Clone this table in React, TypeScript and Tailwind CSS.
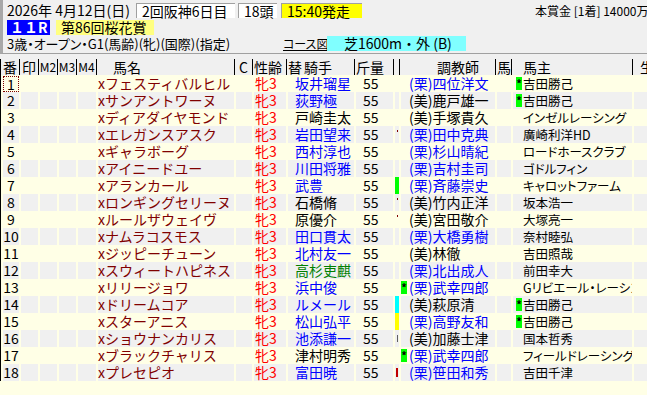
import { clsx as cn } from "clsx";

type Horse = {
  no: number;
  name: string;
  jockey: string;
  jc: "b" | "k" | "g";
  trainer: string;
  tStar?: boolean;
  owner: string;
  oStar?: boolean;
  mark?: "green" | "cyan" | "yellow" | "dot" | "line" | "red2";
};

const horses: Horse[] = [
  { no: 1, name: "フェスティバルヒル", jockey: "坂井瑠星", jc: "b", trainer: "(栗)四位洋文", owner: "吉田勝己", oStar: true },
  { no: 2, name: "サンアントワーヌ", jockey: "荻野極", jc: "b", trainer: "(美)鹿戸雄一", owner: "吉田勝己", oStar: true },
  { no: 3, name: "ディアダイヤモンド", jockey: "戸崎圭太", jc: "k", trainer: "(美)手塚貴久", owner: "インゼルレーシング" },
  { no: 4, name: "エレガンスアスク", jockey: "岩田望来", jc: "b", trainer: "(栗)田中克典", owner: "廣崎利洋HD", mark: "dot" },
  { no: 5, name: "ギャラボーグ", jockey: "西村淳也", jc: "b", trainer: "(栗)杉山晴紀", owner: "ロードホースクラブ" },
  { no: 6, name: "アイニードユー", jockey: "川田将雅", jc: "b", trainer: "(栗)吉村圭司", owner: "ゴドルフィン" },
  { no: 7, name: "アランカール", jockey: "武豊", jc: "b", trainer: "(栗)斉藤崇史", owner: "キャロットファーム", mark: "green" },
  { no: 8, name: "ロンギングセリーヌ", jockey: "石橋脩", jc: "k", trainer: "(美)竹内正洋", owner: "坂本浩一", mark: "dot" },
  { no: 9, name: "ルールザウェイヴ", jockey: "原優介", jc: "k", trainer: "(美)宮田敬介", owner: "大塚亮一", mark: "dot" },
  { no: 10, name: "ナムラコスモス", jockey: "田口貫太", jc: "b", trainer: "(栗)大橋勇樹", owner: "奈村睦弘" },
  { no: 11, name: "ジッピーチューン", jockey: "北村友一", jc: "b", trainer: "(美)林徹", owner: "吉田照哉" },
  { no: 12, name: "スウィートハピネス", jockey: "高杉吏麒", jc: "g", trainer: "(栗)北出成人", owner: "前田幸大" },
  { no: 13, name: "リリージョワ", jockey: "浜中俊", jc: "b", trainer: "(栗)武幸四郎", tStar: true, owner: "Gリビエール・レーシン" },
  { no: 14, name: "ドリームコア", jockey: "ルメール", jc: "b", trainer: "(美)萩原清", owner: "吉田勝己", oStar: true, mark: "cyan" },
  { no: 15, name: "スターアニス", jockey: "松山弘平", jc: "b", trainer: "(栗)高野友和", owner: "吉田勝己", oStar: true, mark: "yellow" },
  { no: 16, name: "ショウナンカリス", jockey: "池添謙一", jc: "b", trainer: "(美)加藤士津", owner: "国本哲秀", mark: "line" },
  { no: 17, name: "ブラックチャリス", jockey: "津村明秀", jc: "k", trainer: "(栗)武幸四郎", tStar: true, owner: "フィールドレーシング" },
  { no: 18, name: "プレセピオ", jockey: "富田暁", jc: "b", trainer: "(栗)笹田和秀", owner: "吉田千津", mark: "red2" },
];

function Star() {
  return (
    <span className="flex h-[13px] w-[6px] items-center justify-center bg-[#00ff00] text-[11px] font-bold leading-none text-black">
      *
    </span>
  );
}

function Mark({ kind }: { kind?: Horse["mark"] }) {
  if (kind === "green") return <div className="h-full w-[4px] bg-[#00ff00]" />;
  if (kind === "cyan") return <div className="h-full w-[4px] bg-[#00ffff]" />;
  if (kind === "yellow") return <div className="h-full w-[4px] bg-[#ffff00]" />;
  if (kind === "dot") return <div className="ml-[2px] mt-[4px] h-[2px] w-[1px] bg-[#800000]" />;
  if (kind === "line") return <div className="ml-[2px] mt-[5px] h-[7px] w-[1px] bg-[#606060]" />;
  if (kind === "red2") return <div className="ml-[1px] mt-[4px] h-[9px] w-[2px] bg-[#c00000]" />;
  return null;
}

function Row({ h, i }: { h: Horse; i: number }) {
  const cell = cn("h-full shrink-0 whitespace-nowrap border-l-2 border-[#ffffe6]", i % 2 === 1 && "bg-[#f0f0f0]");
  const jColor = h.jc === "b" ? "text-[#0000ff]" : h.jc === "g" ? "text-[#008000]" : "text-black";
  const tColor = h.trainer.startsWith("(栗)") ? "text-[#0000ff]" : "text-black";

  return (
    <div className="flex h-[17px] leading-[17px]">
      <div className={cn(cell, "w-[18px] text-center")}>
        {i === 0 ? (
          <div className="mt-[1px] h-[16px] border border-dotted border-[#800000] leading-[14px]">{h.no}</div>
        ) : (
          h.no
        )}
      </div>
      <div className={cn(cell, "w-[19px]")} />
      <div className={cn(cell, "w-[19px]")} />
      <div className={cn(cell, "w-[19px]")} />
      <div className={cn(cell, "w-[20px]")} />
      <div className={cn(cell, "w-[138px] text-[#800000]")}>x{h.name}</div>
      <div className={cn(cell, "w-[18px]")} />
      <div className={cn(cell, "w-[34px] pl-[1px] text-[#ff0000]")}>牝3</div>
      <div className={cn(cell, "w-[68px] pl-[7px]", jColor)}>{h.jockey}</div>
      <div className={cn(cell, "w-[39px] pl-[7px]")}>55</div>
      <div className={cn(cell, "w-[6px]")}>
        <Mark kind={h.mark} />
      </div>
      <div className={cn(cell, "flex w-[96px] items-center")}>
        <div className="w-[8px] shrink-0">{h.tStar && <Star />}</div>
        <span className={tColor}>{h.trainer}</span>
      </div>
      <div className={cn(cell, "w-[16px]")} />
      <div className={cn(cell, "flex w-[121px] items-center overflow-hidden pl-[3px] text-[12.5px] [font-feature-settings:'palt']")}>
        <div className="w-[7px] shrink-0">{h.oStar && <Star />}</div>
        <span>{h.owner}</span>
      </div>
      <div className={cn(cell, "flex-1")} />
    </div>
  );
}

function Th({ className, children }: { className: string; children?: React.ReactNode }) {
  return (
    <div className={cn("h-[16px] shrink-0 whitespace-nowrap border-l border-black leading-[16px]", className)}>
      {children}
    </div>
  );
}

export default function App() {
  return (
    <div className="flex h-[395px] w-[647px] flex-col overflow-hidden bg-[#ffffe6] font-['Noto_Sans_CJK_JP',sans-serif] text-[14px] text-black">
      {/* race info */}
      <div className="h-[54px] shrink-0 border-b border-l-[3px] border-b-[#a0a0a0] border-l-[#a8a8a8] bg-[#f0f0f0] pl-[4px] pt-[3px]">
        <div className="flex h-[15px] items-center whitespace-nowrap leading-[15px]">
          <div className="w-[129px] shrink-0">2026年 4月12日(日)</div>
          <div className="h-full w-[99px] shrink-0 border-l border-t border-[#a0a0a0] bg-white pl-[5px]">2回阪神6日目</div>
          <div className="ml-[3px] h-full w-[39px] shrink-0 border-l border-t border-[#a0a0a0] bg-white pl-[5px]">18頭</div>
          <div className="ml-[4px] h-full w-[81px] shrink-0 border-l border-t border-[#a0a0a0] bg-[#ffff00] pl-[5px]">15:40発走</div>
          <div className="ml-[173px] text-[12px] [font-feature-settings:'palt']">本賞金 [1着] 14000万</div>
        </div>
        <div className="mt-[2px] flex h-[15px] items-center whitespace-nowrap leading-[15px]">
          <div className="h-full w-[43px] shrink-0 bg-[#0000ff] pl-[3px] font-bold text-white">１１R</div>
          <div className="ml-[6px] h-full w-[98px] shrink-0 bg-[#ffff80] pl-[5px]">第86回桜花賞</div>
        </div>
        <div className="mt-[1px] flex h-[15px] items-center whitespace-nowrap leading-[15px]">
          <div className="w-[276px] shrink-0 text-[13px] [font-feature-settings:'palt']">
            3歳・オープン・G1(馬齢)(牝)(国際)(指定)
          </div>
          <div className="w-[44px] shrink-0 text-[12px] underline [font-feature-settings:'palt']">コース図</div>
          <div className="h-full w-[139px] shrink-0 bg-[#80ffff] pl-[17px]">芝1600m・外 (B)</div>
        </div>
      </div>

      {/* column header */}
      <div className="flex h-[21px] shrink-0 items-end bg-[#f0f0f0]">
        <Th className="w-[19px] text-center">番</Th>
        <Th className="w-[19px] text-center">印</Th>
        <Th className="w-[19px] text-center text-[12px]">M2</Th>
        <Th className="w-[19px] text-center text-[12px]">M3</Th>
        <Th className="w-[20px] text-center text-[12px]">M4</Th>
        <Th className="w-[138px] pl-[16px]">馬名</Th>
        <Th className="w-[18px] text-center">C</Th>
        <Th className="w-[34px] pl-[1px]">性齢</Th>
        <Th className="w-[68px] pl-[1px]">
          替<span className="ml-[2px]">騎手</span>
        </Th>
        <Th className="w-[39px] pl-[1px]">斤量</Th>
        <Th className="w-[6px]" />
        <Th className="w-[96px] pl-[37px]">調教師</Th>
        <Th className="w-[16px] overflow-hidden pl-[1px]">馬記</Th>
        <Th className="w-[121px] pl-[11px]">馬主</Th>
        <Th className="flex-1 pl-[7px]">生</Th>
      </div>

      {/* entries */}
      <div className="shrink-0 border-l border-black">
        {horses.map((h, i) => (
          <Row key={h.no} h={h} i={i} />
        ))}
      </div>
    </div>
  );
}
